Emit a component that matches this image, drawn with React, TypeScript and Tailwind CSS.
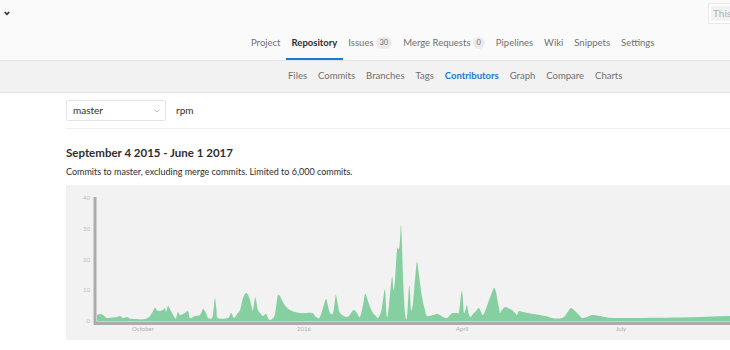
import React from "react";

const pts: [number, number][] = [
  [97, 315], [100, 314], [103, 315], [107, 318], [112, 317.5], [117, 317], [120, 316], [123, 318], [127, 317], [130, 318.5],
  [135, 319], [145, 319], [150, 316], [153, 311], [155, 307.7], [158, 311], [163, 310], [165, 308], [166, 312], [168, 306],
  [170, 309], [172, 313], [175, 318], [176, 318], [178, 312], [180, 315], [185, 313], [188, 311], [190, 318], [195, 316],
  [200, 315], [203, 309], [206, 313], [208, 318], [212, 318], [213.5, 310], [215, 298], [216.5, 310], [218, 318], [228, 318],
  [231, 313], [234, 318], [237, 314], [240, 310], [243, 298], [246, 293], [248, 295], [250, 300], [252, 308], [253, 310],
  [255, 298], [256, 300], [258, 310], [261, 314], [263, 316], [266, 314], [268, 318], [270, 320], [273, 318], [275, 314],
  [277, 300], [278, 295], [280, 296], [284, 304], [290, 310], [300, 313], [312, 313], [315, 316], [318, 318], [320, 317],
  [323, 308], [326, 299], [328, 306], [330, 313], [333, 313], [335, 300], [336, 295], [338, 305], [340, 313], [347, 317],
  [351, 313], [354, 310], [357, 313], [360, 317], [363, 305], [365, 294], [367, 298], [370, 307], [373, 313], [376, 316],
  [378, 318], [381, 312], [383, 300], [385, 290], [387, 317], [389, 305], [392, 277], [393.5, 290], [395, 280], [397, 250],
  [399, 249], [400, 240], [401, 225], [402, 245], [403, 277], [405, 313], [407, 317], [409, 287], [410, 292], [411, 310],
  [413, 303], [415, 280], [417, 262], [419, 275], [422, 297], [425, 310], [427, 316], [433, 315], [437, 314], [440, 315],
  [443, 317], [447, 318], [450, 315], [453, 313], [457, 313], [459, 312], [461, 295], [462, 291], [463, 300], [464, 313],
  [466, 308], [467, 305], [468, 310], [470, 317], [473, 314], [475, 312], [479, 308], [481, 312], [483, 315], [486, 309],
  [488, 303], [491, 295], [494, 288], [496, 292], [497, 298], [499, 308], [500, 313], [502, 310], [505, 307], [508, 308],
  [512, 310], [515, 313], [517, 315], [519, 311], [523, 312], [528, 313], [545, 316], [552, 318], [557, 318.5], [562, 318],
  [565, 316], [567, 313], [569, 310], [571, 308], [574, 310], [577, 313], [580, 316], [582, 318], [587, 317], [592, 315],
  [600, 316], [605, 317], [618, 318], [680, 317.5], [730, 316], [766, 315.5],
];

function smoothPath(p: [number, number][]) {
  let d = `M97,321 L${p[0][0]},${p[0][1]}`;
  for (let i = 0; i < p.length - 1; i++) {
    const p0 = p[i - 1] || p[i];
    const p1 = p[i];
    const p2 = p[i + 1];
    const p3 = p[i + 2] || p2;
    const c1x = p1[0] + (p2[0] - p0[0]) / 6;
    const c1y = Math.min(321, p1[1] + (p2[1] - p0[1]) / 6);
    const c2x = p2[0] - (p3[0] - p1[0]) / 6;
    const c2y = Math.min(321, p2[1] - (p3[1] - p1[1]) / 6);
    d += ` C${c1x.toFixed(2)},${c1y.toFixed(2)} ${c2x.toFixed(2)},${c2y.toFixed(2)} ${p2[0]},${p2[1]}`;
  }
  return d + " L766,321 Z";
}

const topNav = ["Project", "Repository", "Issues", "Merge Requests", "Pipelines", "Wiki", "Snippets", "Settings"];
const subNav = ["Files", "Commits", "Branches", "Tags", "Contributors", "Graph", "Compare", "Charts"];

function Badge({ n }: { n: string }) {
  return (
    <span className="ml-[2px] inline-flex h-[12px] items-center rounded-full bg-[#ebebeb] px-[4px] text-[7.5px] leading-none text-[#707070]">
      {n}
    </span>
  );
}

export default function App() {
  const yTicks = [
    { v: "40", y: 198 },
    { v: "30", y: 229 },
    { v: "20", y: 260 },
    { v: "10", y: 290 },
    { v: "0", y: 321 },
  ];
  const xTicks = [
    { t: "October", x: 143 },
    { t: "2016", x: 304 },
    { t: "April", x: 462 },
    { t: "July", x: 621 },
  ];
  return (
    <div className="h-[350px] w-[730px] overflow-hidden bg-white font-['Lato',sans-serif] text-[#2e2e2e]">
      <header className="border-b border-[#e5e5e5] bg-[#fafafa]">
        <div className="flex h-[28px] w-[830px] items-start">
          <div className="w-[708px] shrink-0 pl-[4px] pt-[11px]">
            <svg width="6" height="5" viewBox="0 0 6 5">
              <path d="M0.8 1 L3 3.4 L5.2 1" fill="none" stroke="#333" strokeWidth="1.6" />
            </svg>
          </div>
          <div className="mt-[3px] h-[21px] w-[100px] shrink-0 rounded-[2px] border border-[#e8e8e8] bg-white p-[2px]">
            <div className="h-full bg-[#f2f2f2] pl-[2px] text-[10px] leading-[15px] text-[#b0b0b0]">This</div>
          </div>
        </div>
        <nav className="flex h-[32px] pl-[245.5px] text-[9.5px]">
          {topNav.map((t) => (
            <div
              key={t}
              className={
                "flex h-full items-center border-b-2 px-[5.5px] " +
                (t === "Repository" ? "border-[#1f78d1] font-bold text-[#2e2e2e]" : "border-transparent text-[#707070]")
              }
            >
              {t}
              {t === "Issues" && <Badge n="30" />}
              {t === "Merge Requests" && <Badge n="0" />}
            </div>
          ))}
        </nav>
      </header>
      <div className="flex h-[32px] border-b border-[#e5e5e5] bg-[#f2f2f2] pl-[282.5px] text-[9.5px]">
        {subNav.map((t) => (
          <div
            key={t}
            className={
              "flex h-full items-center px-[5.5px] pb-[1px] " +
              (t === "Contributors" ? "font-bold text-[#1f78d1]" : "text-[#707070]")
            }
          >
            {t}
          </div>
        ))}
      </div>
      <main className="pl-[66px]">
        <div className="w-[700px]">
          <div className="flex items-center border-b border-[#f0f0f0] pb-[7px] pt-[7px]">
            <div className="flex h-[21px] w-[100px] items-center rounded-[2px] border border-[#e5e5e5] bg-white pl-[6px] pr-[5px] text-[10px]">
              <span>master</span>
              <svg className="ml-auto" width="6" height="4" viewBox="0 0 6 4">
                <path d="M0.5 0.8 L3 3 L5.5 0.8" fill="none" stroke="#b5b5b5" strokeWidth="0.9" />
              </svg>
            </div>
            <span className="ml-[10px] text-[10px]">rpm</span>
          </div>
          <h2 className="mt-[16px] text-[11.5px] font-bold leading-[16px] text-[#2e2e2e]">September 4 2015 - June 1 2017</h2>
          <p className="mt-[5px] text-[9px] leading-[12px] text-[#2e2e2e]">
            Commits to master, excluding merge commits. Limited to 6,000 commits.
          </p>
          <div className="mt-[7px] h-[155px] bg-[#f2f2f2]">
            <svg width="700" height="155" viewBox="66 185 700 155">
              <path d={smoothPath(pts)} fill="#86cfa0" />
              <rect x="93.5" y="197" width="3" height="125" fill="#acacac" />
              <rect x="93.5" y="321.5" width="673" height="3.5" fill="#acacac" />
              {yTicks.map((t) => (
                <text
                  key={t.v}
                  x="90"
                  y={t.y + 2}
                  textAnchor="end"
                  fontSize="6"
                  fill="#bdbdbd"
                  fontFamily="Lato, sans-serif"
                >
                  {t.v}
                </text>
              ))}
              {xTicks.map((t) => (
                <text
                  key={t.t}
                  x={t.x}
                  y="331"
                  textAnchor="middle"
                  fontSize="6"
                  fill="#b0b0b0"
                  fontFamily="Lato, sans-serif"
                >
                  {t.t}
                </text>
              ))}
            </svg>
          </div>
        </div>
      </main>
    </div>
  );
}
